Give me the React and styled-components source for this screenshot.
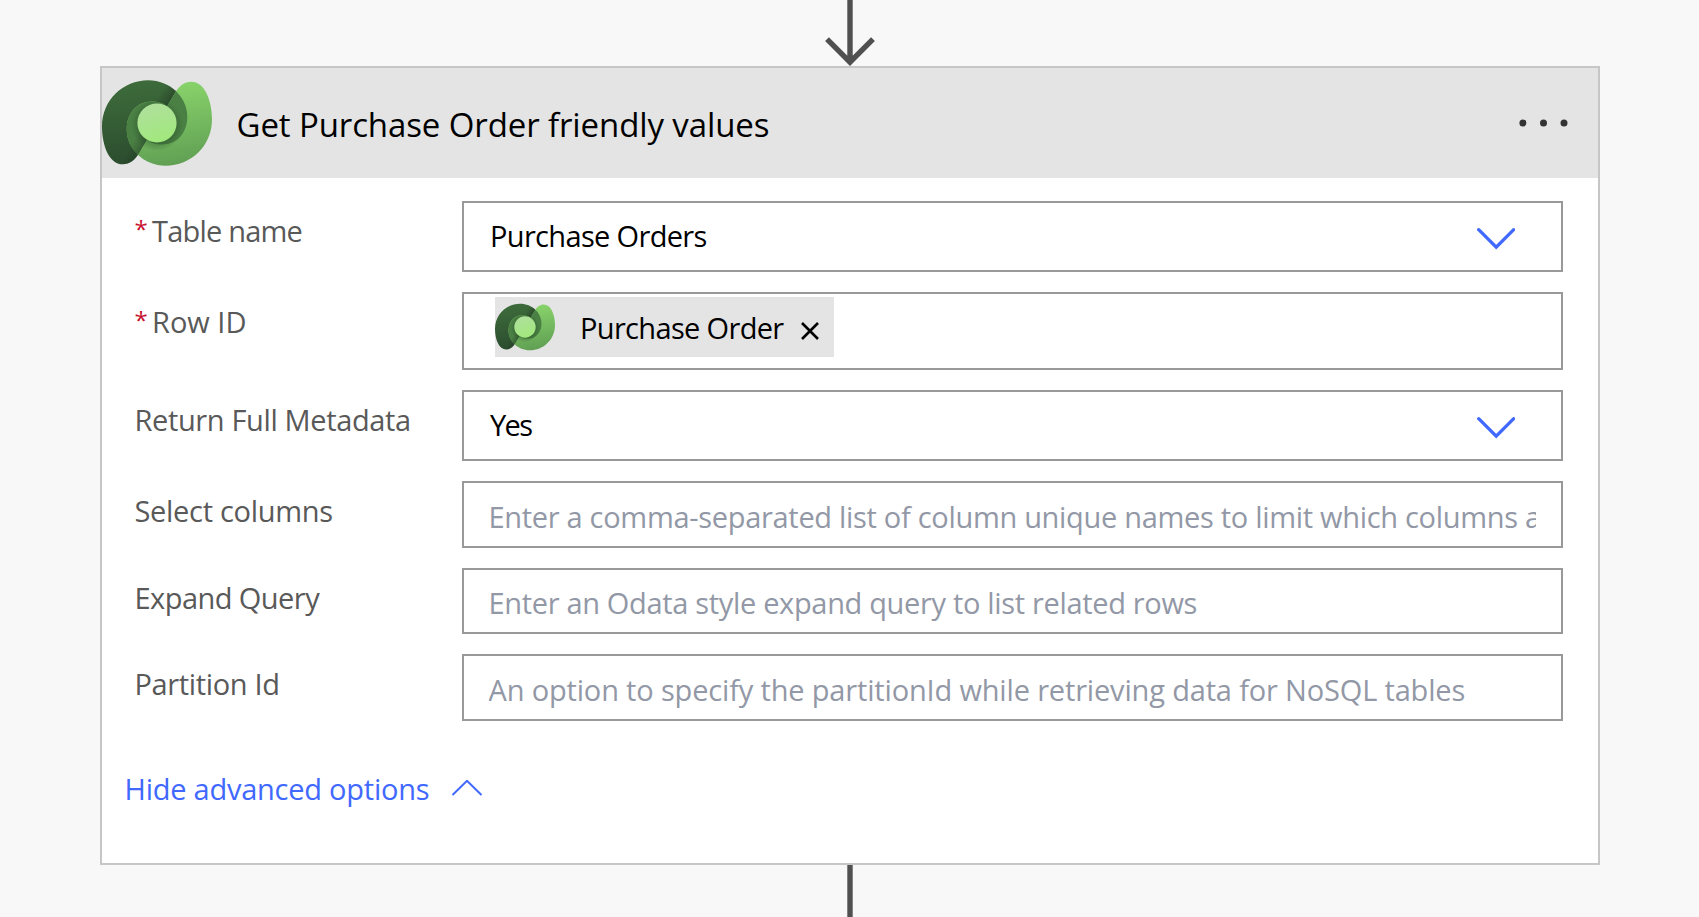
import React from "react";
import styled, { createGlobalStyle } from "styled-components";

const GlobalStyle = createGlobalStyle`
  * { box-sizing: border-box; }
  body {
    margin: 0;
    background: #f8f8f8;
    font-family: "Open Sans", "Noto Sans", sans-serif;
  }
`;

const Canvas = styled.main`
  height: 917px;
  overflow: hidden;
  display: flex;
  flex-direction: column;
  align-items: center;
  padding-left: 1px;
`;

const Arrow = styled.svg`
  display: block;
  flex: none;
  width: 50px;
  height: 66px;
`;

const Tail = styled.svg`
  display: block;
  flex: none;
  width: 6px;
  height: 52px;
`;

const Card = styled.section`
  width: 1500px;
  height: 799px;
  flex: none;
  border: 2px solid #c6c6c6;
  background: #fff;
`;

const Header = styled.header`
  height: 110px;
  display: flex;
  align-items: center;
  background: #e4e4e4;
`;

const Logo = styled.svg`
  display: block;
  flex: none;
  width: ${(p) => p.$size}px;
  height: ${(p) => p.$size}px;
`;

const Title = styled.h1`
  margin: 0;
  padding: 3px 0 0 24.5px;
  flex: 1;
  font-size: 33px;
  font-weight: 400;
  line-height: 46px;
  color: #000;
  white-space: nowrap;
  letter-spacing: -0.11px;
`;

const MoreButton = styled.button`
  border: 0;
  padding: 0;
  margin: 0 29.5px 1px 0;
  background: none;
  svg {
    display: block;
  }
`;

const Form = styled.div`
  display: flex;
  flex-direction: column;
  gap: 20px;
  padding: 23px 35px 0 32.5px;
`;

const Row = styled.div`
  display: grid;
  grid-template-columns: 327.5px minmax(0, 1fr);
`;

const Label = styled.label`
  display: flex;
  padding-top: 10px;
  font-size: 29px;
  line-height: 40px;
  color: #595959;
  white-space: nowrap;
  letter-spacing: ${(p) => p.$tracking || 0}px;
`;

const Required = styled.span`
  width: 17.5px;
  padding-left: 0;
  color: #c8102e;
  font-size: 24px;
  line-height: 36px;
`;

const Field = styled.div`
  display: flex;
  align-items: center;
  height: ${(p) => p.$height}px;
  border: 2px solid #999;
  background: #fff;
`;

const SelectField = styled(Field)`
  padding: 0 46px 0 26px;
`;

const TokenField = styled(Field)`
  align-items: flex-start;
  padding: 3px 0 0 31px;
`;

const TextField = styled(Field)`
  padding: 4px 25px 0 24.5px;
`;

const Value = styled.span`
  flex: 1;
  font-size: 29px;
  line-height: 40px;
  color: #000;
  white-space: nowrap;
  letter-spacing: ${(p) => p.$tracking || 0}px;
`;

const SelectedValue = styled(Value)`
  padding-bottom: 2px;
`;

const Placeholder = styled(Value)`
  min-width: 0;
  overflow: hidden;
  color: #9298a6;
`;

const Chevron = styled.svg`
  display: block;
  flex: none;
  margin-top: 5px;
`;

const Token = styled.span`
  display: flex;
  align-items: center;
  width: 339px;
  height: 60px;
  background: #e4e4e4;
`;

const TokenText = styled.span`
  width: 246px;
  padding: 2px 0 0 25px;
  font-size: 29px;
  line-height: 40px;
  white-space: nowrap;
  letter-spacing: -0.66px;
`;

const TokenClose = styled.svg`
  display: block;
  margin-top: 8px;
`;

const AdvancedToggle = styled.button`
  display: flex;
  align-items: center;
  margin: 48px 0 0 22.5px;
  padding: 0;
  border: 0;
  background: none;
  font: inherit;
  font-size: 29px;
  line-height: 40px;
  color: #4169ff;
  white-space: nowrap;
  letter-spacing: -0.24px;
`;

const ToggleText = styled.span`
  width: 326.5px;
  text-align: left;
`;

function DataverseLogo({ size, id }) {
  const swirl =
    "M20.7 96.3 C7 96.3 0 77 0 58.7 C0 32 21 12.3 46.3 12.3 C68 12.3 85.3 29 85.3 48.5 C85.3 65 75 76.5 60.3 76.5 C53 76.5 48 74.5 45 71.5 L37 85 C33 92 28 96.3 20.7 96.3 Z";
  return (
    <Logo $size={size} viewBox="0 0 110 110" aria-hidden="true">
      <defs>
        <linearGradient id={`${id}-dark`} x1="30" y1="15" x2="42" y2="95" gradientUnits="userSpaceOnUse">
          <stop offset="0" stopColor="#3d6b3b" />
          <stop offset="1" stopColor="#2b4c2e" />
        </linearGradient>
        <linearGradient id={`${id}-light`} x1="30" y1="15" x2="42" y2="95" gradientUnits="userSpaceOnUse">
          <stop offset="0" stopColor="#61a054" />
          <stop offset="1" stopColor="#89d46b" />
        </linearGradient>
        <linearGradient id={`${id}-core`} x1="48" y1="36" x2="60" y2="74" gradientUnits="userSpaceOnUse">
          <stop offset="0" stopColor="#afe09c" />
          <stop offset="1" stopColor="#a1e87c" />
        </linearGradient>
        <radialGradient id={`${id}-shade`} cx="55" cy="57" r="26" gradientUnits="userSpaceOnUse">
          <stop offset="0.68" stopColor="#1f3f1f" stopOpacity="0.34" />
          <stop offset="1" stopColor="#1f3f1f" stopOpacity="0" />
        </radialGradient>
        <linearGradient id={`${id}-fold`} x1="60" y1="22" x2="71" y2="29" gradientUnits="userSpaceOnUse">
          <stop offset="0" stopColor="#20351f" stopOpacity="0" />
          <stop offset="1" stopColor="#20351f" stopOpacity="0.5" />
        </linearGradient>
        <linearGradient id={`${id}-foot`} x1="27" y1="80" x2="39" y2="87" gradientUnits="userSpaceOnUse">
          <stop offset="0" stopColor="#20351f" stopOpacity="0" />
          <stop offset="1" stopColor="#20351f" stopOpacity="0.5" />
        </linearGradient>
        <clipPath id={`${id}-clip`}>
          <path d={swirl} />
        </clipPath>
      </defs>
      <path d={swirl} fill={`url(#${id}-dark)`} />
      <g clipPath={`url(#${id}-clip)`}>
        <path d="M45 5 H85 L55 55 L45 40 Z" fill={`url(#${id}-fold)`} />
      </g>
      <path d={swirl} fill={`url(#${id}-light)`} transform="rotate(180 55 55)" />
      <g clipPath={`url(#${id}-clip)`}>
        <path d={swirl} fill="#4a8044" transform="rotate(180 55 55)" />
        <path d="M0 60 H55 L30 100 H0 Z" fill={`url(#${id}-foot)`} />
      </g>
      <circle cx="55" cy="57" r="26" fill={`url(#${id}-shade)`} />
      <circle cx="55" cy="55" r="19.6" fill={`url(#${id}-core)`} />
    </Logo>
  );
}

function ChevronDown() {
  return (
    <Chevron width="38" height="24" viewBox="0 0 38 24" fill="none" stroke="#4169ff" strokeWidth="3.3" strokeLinecap="round">
      <path d="M1.7 2.7 L19.2 20.2 L36.7 2.7" />
    </Chevron>
  );
}

const textRows = [
  {
    label: "Select columns",
    labelTracking: -0.3,
    height: 67,
    text: "Enter a comma-separated list of column unique names to limit which columns are returned",
    tracking: -0.305,
  },
  {
    label: "Expand Query",
    labelTracking: -0.55,
    height: 66,
    text: "Enter an Odata style expand query to list related rows",
    tracking: -0.33,
  },
  {
    label: "Partition Id",
    labelTracking: -0.35,
    height: 67,
    text: "An option to specify the partitionId while retrieving data for NoSQL tables",
    tracking: -0.165,
  },
];

export default function App() {
  return (
    <>
      <GlobalStyle />
      <Canvas>
        <Arrow viewBox="0 0 50 66" fill="none" stroke="#505050" strokeWidth="5.4">
          <path d="M25 0 V62 M2 39.2 L25 62.2 L48 39.2" />
        </Arrow>
        <Card>
          <Header>
            <DataverseLogo size={110} id="header" />
            <Title>Get Purchase Order friendly values</Title>
            <MoreButton aria-label="More">
              <svg width="50" height="8" viewBox="0 0 50 8" fill="#333">
                <circle cx="3.9" cy="4" r="3.5" />
                <circle cx="24.5" cy="4" r="3.5" />
                <circle cx="45" cy="4" r="3.5" />
              </svg>
            </MoreButton>
          </Header>
          <Form>
            <Row>
              <Label $tracking={-0.8}>
                <Required>*</Required>
                Table name
              </Label>
              <SelectField $height={71}>
                <SelectedValue $tracking={-0.66}>Purchase Orders</SelectedValue>
                <ChevronDown />
              </SelectField>
            </Row>
            <Row>
              <Label $tracking={0}>
                <Required>*</Required>
                Row ID
              </Label>
              <TokenField $height={78}>
                <Token>
                  <DataverseLogo size={60} id="token" />
                  <TokenText>Purchase Order</TokenText>
                  <TokenClose width="18" height="18" viewBox="0 0 18 18" stroke="#000" strokeWidth="2.6">
                    <path d="M1 1 L17 17 M17 1 L1 17" />
                  </TokenClose>
                </Token>
              </TokenField>
            </Row>
            <Row>
              <Label $tracking={-0.36}>Return Full Metadata</Label>
              <SelectField $height={71}>
                <SelectedValue $tracking={-1.6}>Yes</SelectedValue>
                <ChevronDown />
              </SelectField>
            </Row>
            {textRows.map((row) => (
              <Row key={row.label}>
                <Label $tracking={row.labelTracking}>{row.label}</Label>
                <TextField $height={row.height}>
                  <Placeholder $tracking={row.tracking}>{row.text}</Placeholder>
                </TextField>
              </Row>
            ))}
          </Form>
          <AdvancedToggle>
            <ToggleText>Hide advanced options</ToggleText>
            <svg width="32" height="18" viewBox="0 0 32 18" fill="none" stroke="#4169ff" strokeWidth="2">
              <path d="M1.5 15 L16 0.8 L30.5 15" />
            </svg>
          </AdvancedToggle>
        </Card>
        <Tail viewBox="0 0 6 52" fill="#505050">
          <rect x="0.3" width="5.4" height="52" />
        </Tail>
      </Canvas>
    </>
  );
}
